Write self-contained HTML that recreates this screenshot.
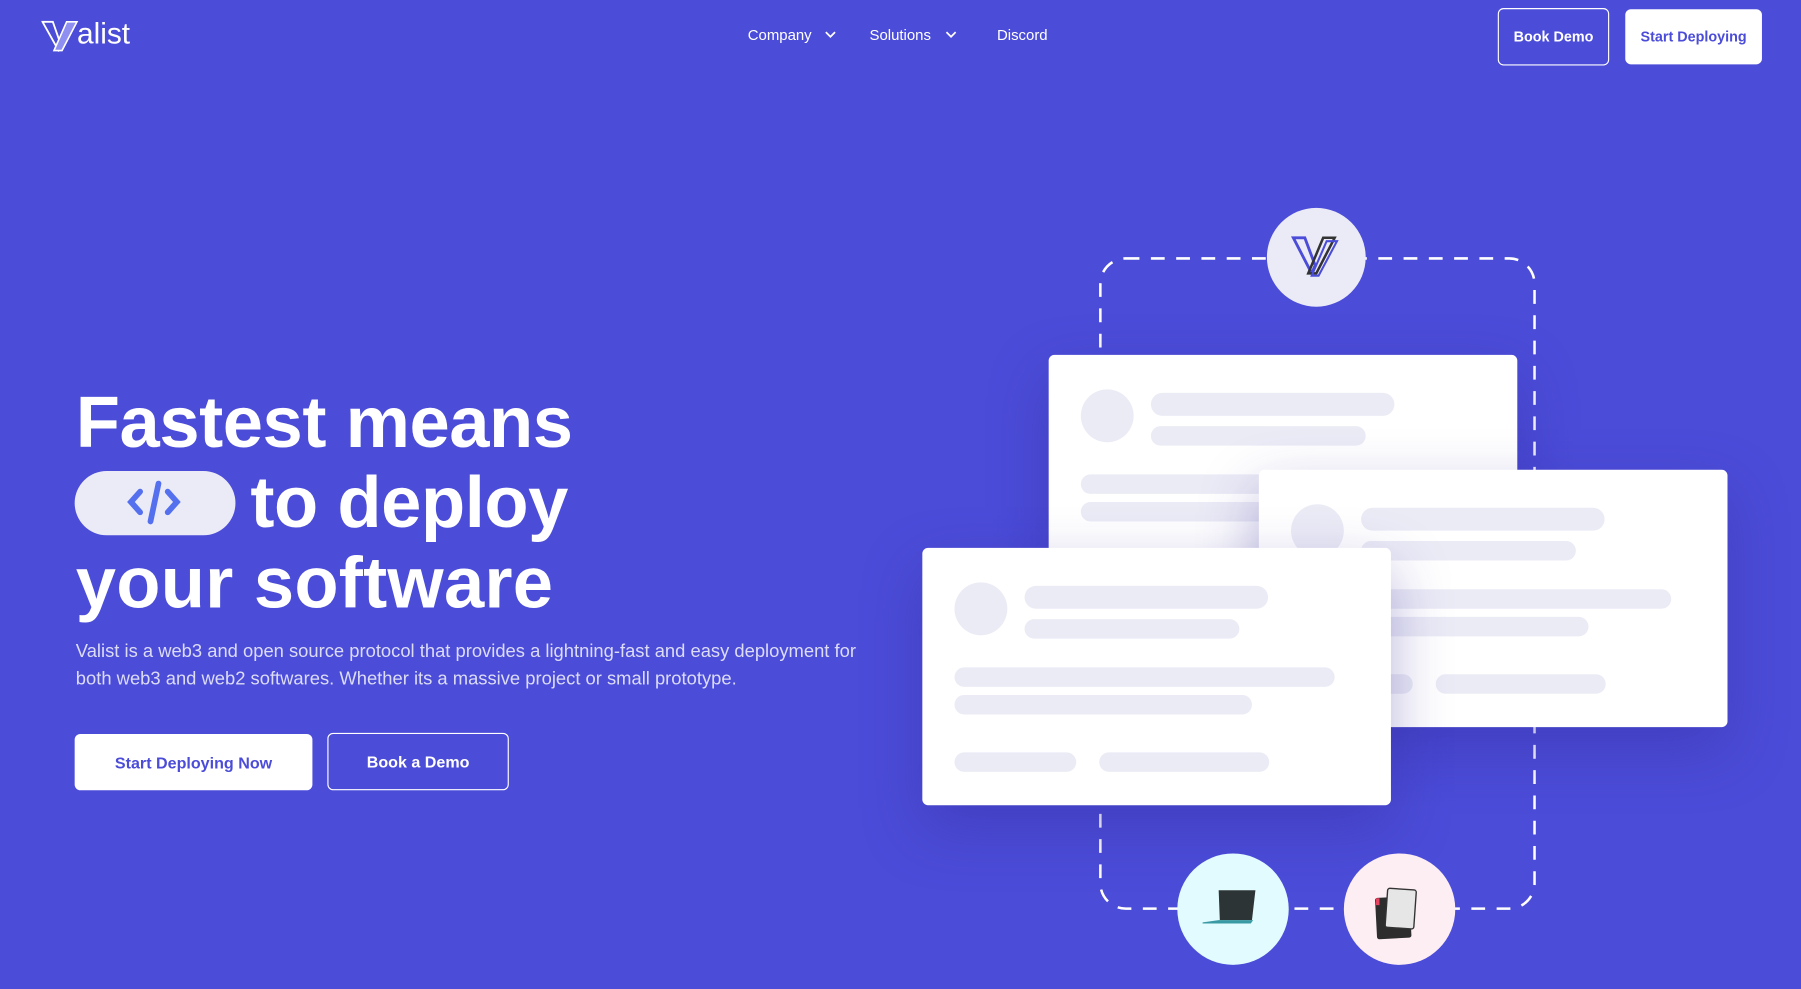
<!DOCTYPE html>
<html><head><meta charset="utf-8"><style>
html,body{margin:0;padding:0;width:1801px;height:989px;overflow:hidden;background:#4b4cd8;font-family:"Liberation Sans",sans-serif;}
#w{position:absolute;left:0;top:0;width:1568px;height:861px;transform:scale(1.14860,1.14866);transform-origin:0 0;}
.a{position:absolute}
.nav{color:#fff;font-size:13px;top:23px}
.btn{position:absolute;border-radius:5px;font-weight:bold;font-size:12.5px;display:flex;align-items:center;justify-content:center;box-sizing:border-box}
h1{position:absolute;left:66px;margin:0;color:#fff;font-size:63px;font-weight:bold;letter-spacing:-0.4px;line-height:70px}
.card{position:absolute;background:#fff;border-radius:5px;width:408px;height:224px;box-shadow:0 20px 50px rgba(50,40,150,.35)}
.bar{position:absolute;background:#ebebf6;border-radius:10px}
.av{position:absolute;background:#ebebf6;border-radius:50%;width:46px;height:46px;left:28px;top:30px}
</style></head><body><div id="w">
<svg class="a" style="left:36px;top:18px" width="33" height="27" viewBox="0 0 33 27"><path d="M1 1h9l7 20 -2 5z" fill="none" stroke="#fff" stroke-width="1.6"/><path d="M22 1h9l-13 25h-7z" fill="#8e8ff0" stroke="#fff" stroke-width="1.4"/></svg>
<div class="a" style="left:67px;top:14px;color:#fff;font-size:26px;">alist</div>
<div class="a nav" style="left:651px">Company</div>
<div class="a nav" style="left:757px">Solutions</div>
<div class="a nav" style="left:868px">Discord</div>
<svg class="a" style="left:718px;top:27px" width="10" height="7"><path d="M1 1l4 4 4-4" stroke="#fff" stroke-width="1.5" fill="none"/></svg>
<svg class="a" style="left:823px;top:27px" width="10" height="7"><path d="M1 1l4 4 4-4" stroke="#fff" stroke-width="1.5" fill="none"/></svg>
<div class="btn" style="left:1304px;top:7px;width:97px;height:50px;border:1px solid #fff;color:#fff">Book Demo</div>
<div class="btn" style="left:1415px;top:8px;width:119px;height:48px;background:#fff;color:#4b4cd8">Start Deploying</div>
<h1 style="top:333px">Fastest means</h1>
<div class="a" style="left:65px;top:410px;width:140px;height:56px;border-radius:28px;background:#ebebf8"></div>
<svg class="a" style="left:108px;top:416px" width="56" height="44" viewBox="0 0 56 44"><g stroke="#5570ee" stroke-width="5" stroke-linecap="round" fill="none"><path d="M14 12l-8 9 8 9"/><path d="M38 12l8 9-8 9"/><path d="M30 5l-7 33"/></g></svg>
<h1 style="top:403px;left:218px">to deploy</h1>
<h1 style="top:473px;letter-spacing:0.2px">your software</h1>
<div class="a" style="left:66px;top:556px;color:#dcdcf6;font-size:16px;line-height:24px;width:760px">Valist is a web3 and open source protocol that provides a lightning-fast and easy deployment for<br>both web3 and web2 softwares. Whether its a massive project or small prototype.</div>
<div class="btn" style="left:65px;top:639px;width:207px;height:49px;background:#fff;color:#4b4cd8;font-size:14px">Start Deploying Now</div>
<div class="btn" style="left:285px;top:638px;width:158px;height:50px;border:1px solid #fff;color:#fff;font-size:14px">Book a Demo</div>
<svg class="a" style="left:950px;top:218px" width="395" height="582"><rect x="8" y="7" width="378" height="566" rx="22" fill="none" stroke="#fff" stroke-width="2.2" stroke-dasharray="12 10"/></svg>
<div class="card" style="left:913px;top:309px"><div class="av"></div><div class="bar" style="left:89px;top:33px;width:212px;height:20px"></div><div class="bar" style="left:89px;top:62px;width:187px;height:17px"></div><div class="bar" style="left:28px;top:104px;width:331px;height:17px"></div><div class="bar" style="left:28px;top:128px;width:259px;height:17px"></div></div>
<div class="card" style="left:1096px;top:409px"><div class="av"></div><div class="bar" style="left:89px;top:33px;width:212px;height:20px"></div><div class="bar" style="left:89px;top:62px;width:187px;height:17px"></div><div class="bar" style="left:28px;top:104px;width:331px;height:17px"></div><div class="bar" style="left:28px;top:128px;width:259px;height:17px"></div><div class="bar" style="left:28px;top:178px;width:106px;height:17px"></div><div class="bar" style="left:154px;top:178px;width:148px;height:17px"></div></div>
<div class="card" style="left:803px;top:477px"><div class="av"></div><div class="bar" style="left:89px;top:33px;width:212px;height:20px"></div><div class="bar" style="left:89px;top:62px;width:187px;height:17px"></div><div class="bar" style="left:28px;top:104px;width:331px;height:17px"></div><div class="bar" style="left:28px;top:128px;width:259px;height:17px"></div><div class="bar" style="left:28px;top:178px;width:106px;height:17px"></div><div class="bar" style="left:154px;top:178px;width:148px;height:17px"></div></div>
<div class="a" style="left:1103px;top:181px;width:86px;height:86px;border-radius:50%;background:#ebebf8"></div>
<svg class="a" style="left:1124px;top:204px" width="46" height="40" viewBox="0 0 46 40"><path d="M2 3h10l9 24 -3 7z" fill="none" stroke="#4b4cd8" stroke-width="2.5"/><path d="M28 3h10l-16 31h-7z" fill="none" stroke="#333" stroke-width="2.2"/><path d="M31 6h9l-16 30h-6z" fill="none" stroke="#4b4cd8" stroke-width="1.8"/></svg>
<div class="a" style="left:1025px;top:743px;width:97px;height:97px;border-radius:50%;background:#e2fbff"></div>
<svg class="a" style="left:1045px;top:770px" width="56" height="40"><path d="M16 5h32l-3 26h-28z" fill="#2d3436"/><path d="M2 33l14-2h30l-2 3h-42z" fill="#3a9aa3"/></svg>
<div class="a" style="left:1170px;top:743px;width:97px;height:97px;border-radius:50%;background:#fdeef4"></div>
<svg class="a" style="left:1195px;top:772px" width="50" height="50"><rect x="3" y="9" width="30" height="36" rx="2" fill="#2d2d2d" transform="rotate(-3 18 27)"/><rect x="3" y="10" width="3" height="6" fill="#e8435f"/><rect x="12" y="2" width="25" height="34" rx="2" fill="#e6e6e6" stroke="#333" stroke-width="1.2" transform="rotate(4 24 19)"/></svg>
</div></body></html>
